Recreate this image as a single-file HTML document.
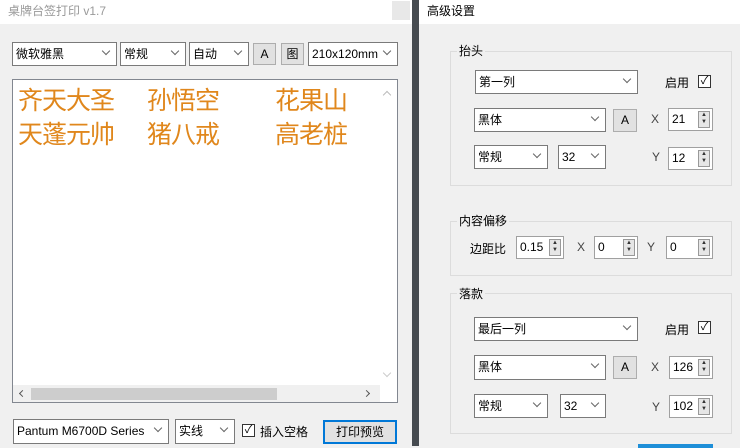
<!DOCTYPE html>
<html><head><meta charset="utf-8"><style>
*{box-sizing:border-box;margin:0;padding:0}
body{width:740px;height:446px;overflow:hidden;background:#f0f0f0;position:relative;font-family:"Liberation Sans","Noto Sans CJK SC",sans-serif;font-size:12px;color:#000}
.a{position:absolute}
.cb{position:absolute;background:#fff;border:1px solid #7a7a7a;height:24px;line-height:22px;padding-left:3px;font-size:12px;white-space:nowrap;overflow:hidden}
.cb .ar{position:absolute;right:5px;top:8px;width:9px;height:6px;background:#fff}
.cb .ar::before{content:"";position:absolute;left:1px;top:-3px;width:5px;height:5px;border-right:1px solid #666;border-bottom:1px solid #666;transform:rotate(45deg)}
.btn{position:absolute;background:#e1e1e1;border:1px solid #adadad;text-align:center;line-height:20px;font-size:12px}
.sp{position:absolute;background:#fff;border:1px solid #a0a0a0;height:23px;line-height:21px;padding-left:3px;font-size:12px}
.sp .s{position:absolute;right:2px;top:2px;width:12px;height:17px;background:#e6e6e6;border:1px solid #999;font-size:6px;line-height:7px;text-align:center;color:#333}
.chk{position:absolute;width:13px;height:13px;border:1px solid #333;background:#fff;font-size:11px;line-height:11px;text-align:center}
.grp{position:absolute;border:1px solid #dcdcdc}
.gl{position:absolute;background:#f0f0f0;padding:0 2px;font-size:12px}
.cn{position:absolute;color:#e0871c;font-size:25px;line-height:30px;letter-spacing:-1px}
</style></head><body>
<div class="a" style="left:0;top:0;width:412px;height:24px;background:#fff"></div>
<div class="a" style="left:8px;top:2px;color:#999;font-size:12px">桌牌台签打印 v1.7</div>
<div class="a" style="left:392px;top:1px;width:18px;height:19px;background:#e8e8e8"></div>
<div class="a" style="left:412px;top:0;width:7px;height:446px;background:#464b50"></div>
<div class="a" style="left:419px;top:0;width:321px;height:24px;background:#fff"></div>
<div class="a" style="left:427px;top:2px;font-size:12px">高级设置</div>

<div class="cb" style="left:12px;top:42px;width:105px">微软雅黑<span class="ar"></span></div>
<div class="cb" style="left:120px;top:42px;width:66px">常规<span class="ar"></span></div>
<div class="cb" style="left:189px;top:42px;width:60px">自动<span class="ar"></span></div>
<div class="btn" style="left:253px;top:43px;width:23px;height:22px">A</div>
<div class="btn" style="left:281px;top:43px;width:23px;height:22px">图</div>
<div class="cb" style="left:308px;top:42px;width:90px">210x120mm<span class="ar"></span></div>

<div class="a" style="left:12px;top:79px;width:386px;height:324px;background:#fff;border:1px solid #828790"></div>
<div class="cn" style="left:18px;top:86px">齐天大圣</div>
<div class="cn" style="left:147px;top:86px">孙悟空</div>
<div class="cn" style="left:275px;top:86px">花果山</div>
<div class="cn" style="left:18px;top:120px">天蓬元帅</div>
<div class="cn" style="left:147px;top:120px">猪八戒</div>
<div class="cn" style="left:275px;top:120px">高老桩</div>
<div class="a" style="left:380px;top:80px;width:17px;height:305px;background:#fff"></div>
<div class="a" style="left:384px;top:92px;width:6px;height:6px;border-left:1px solid #bbb;border-top:1px solid #bbb;transform:rotate(45deg)"></div>
<div class="a" style="left:384px;top:370px;width:6px;height:6px;border-right:1px solid #ccc;border-bottom:1px solid #ccc;transform:rotate(45deg)"></div>
<div class="a" style="left:13px;top:385px;width:367px;height:17px;background:#f0f0f0"></div>
<div class="a" style="left:31px;top:388px;width:246px;height:12px;background:#cdcdcd"></div>
<div class="a" style="left:20px;top:391px;width:5px;height:5px;border-left:1px solid #555;border-bottom:1px solid #555;transform:rotate(45deg)"></div>
<div class="a" style="left:364px;top:391px;width:5px;height:5px;border-right:1px solid #555;border-top:1px solid #555;transform:rotate(45deg)"></div>

<div class="cb" style="left:13px;top:419px;width:156px;height:25px">Pantum M6700D Series<span class="ar"></span></div>
<div class="cb" style="left:175px;top:419px;width:60px;height:25px">实线<span class="ar"></span></div>
<div class="chk" style="left:242px;top:424px">✓</div>
<div class="a" style="left:260px;top:423px;font-size:12px">插入空格</div>
<div class="btn" style="left:323px;top:420px;width:74px;height:24px;border:2px solid #0078d7;line-height:20px">打印预览</div>

<div class="grp" style="left:450px;top:51px;width:282px;height:135px"></div>
<div class="gl" style="left:457px;top:42px">抬头</div>
<div class="cb" style="left:475px;top:70px;width:163px">第一列<span class="ar"></span></div>
<div class="a" style="left:665px;top:74px">启用</div>
<div class="chk" style="left:698px;top:75px">✓</div>
<div class="cb" style="left:474px;top:108px;width:132px">黑体<span class="ar"></span></div>
<div class="btn" style="left:613px;top:109px;width:24px;height:23px">A</div>
<div class="a" style="left:651px;top:112px;color:#444">X</div>
<div class="sp" style="left:668px;top:108px;width:45px">21<div class="s">▲<br>▼</div></div>
<div class="cb" style="left:474px;top:145px;width:74px">常规<span class="ar"></span></div>
<div class="cb" style="left:558px;top:145px;width:48px">32<span class="ar"></span></div>
<div class="a" style="left:652px;top:150px;color:#444">Y</div>
<div class="sp" style="left:668px;top:147px;width:45px">12<div class="s">▲<br>▼</div></div>

<div class="grp" style="left:450px;top:221px;width:282px;height:55px"></div>
<div class="gl" style="left:457px;top:212px">内容偏移</div>
<div class="a" style="left:470px;top:240px">边距比</div>
<div class="sp" style="left:516px;top:236px;width:48px">0.15<div class="s">▲<br>▼</div></div>
<div class="a" style="left:577px;top:240px;color:#444">X</div>
<div class="sp" style="left:594px;top:236px;width:44px">0<div class="s">▲<br>▼</div></div>
<div class="a" style="left:647px;top:240px;color:#444">Y</div>
<div class="sp" style="left:666px;top:236px;width:47px">0<div class="s">▲<br>▼</div></div>

<div class="grp" style="left:450px;top:293px;width:282px;height:141px"></div>
<div class="gl" style="left:457px;top:285px">落款</div>
<div class="cb" style="left:474px;top:317px;width:164px">最后一列<span class="ar"></span></div>
<div class="a" style="left:665px;top:321px">启用</div>
<div class="chk" style="left:698px;top:321px">✓</div>
<div class="cb" style="left:474px;top:355px;width:132px;height:25px">黑体<span class="ar"></span></div>
<div class="btn" style="left:613px;top:356px;width:24px;height:23px">A</div>
<div class="a" style="left:651px;top:360px;color:#444">X</div>
<div class="sp" style="left:669px;top:356px;width:44px">126<div class="s">▲<br>▼</div></div>
<div class="cb" style="left:474px;top:394px;width:74px">常规<span class="ar"></span></div>
<div class="cb" style="left:560px;top:394px;width:46px">32<span class="ar"></span></div>
<div class="a" style="left:652px;top:400px;color:#444">Y</div>
<div class="sp" style="left:669px;top:395px;width:44px">102<div class="s">▲<br>▼</div></div>
<div class="a" style="left:638px;top:444px;width:75px;height:4px;background:#1e8fd8"></div>
</body></html>
